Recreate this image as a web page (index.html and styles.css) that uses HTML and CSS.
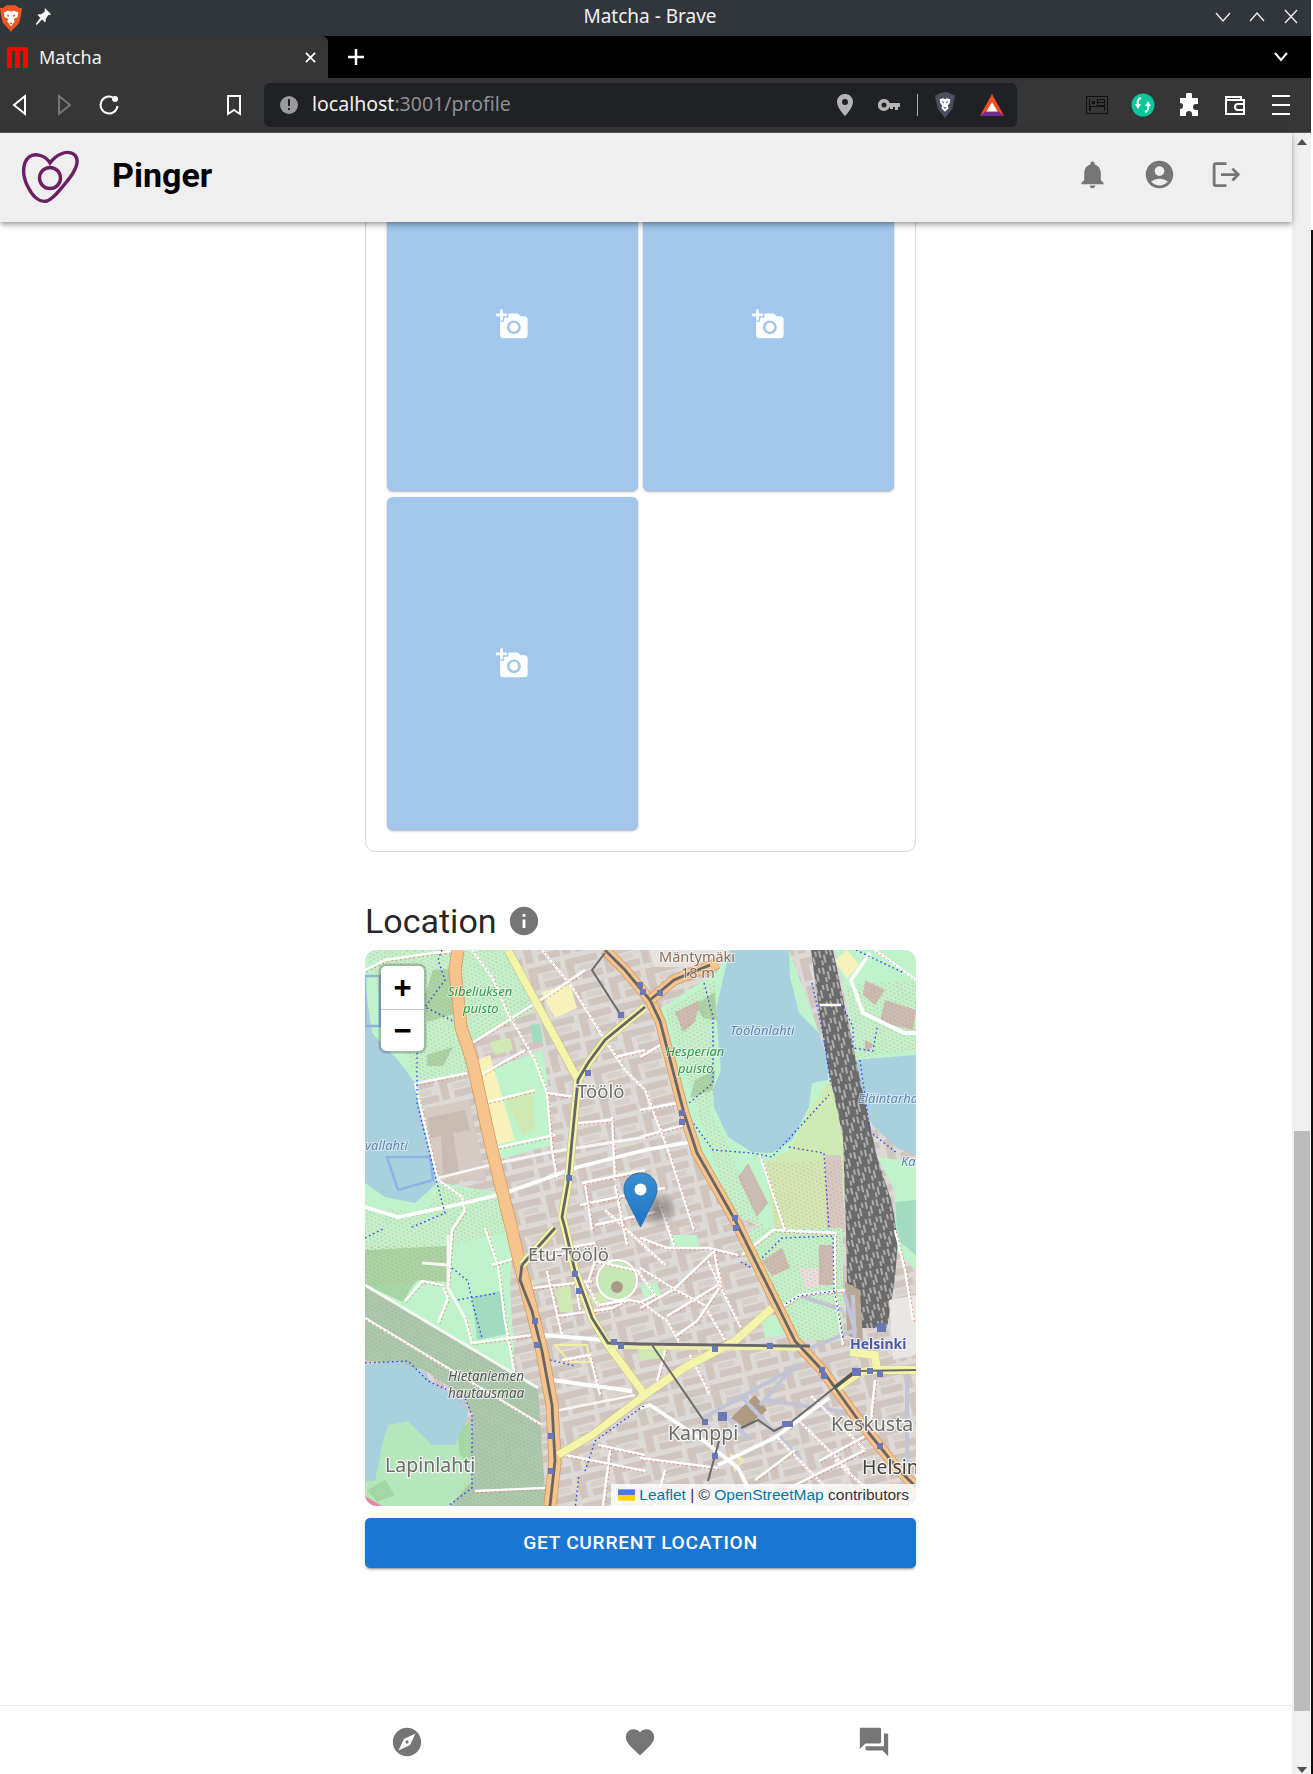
FILE: index.html
```html
<!DOCTYPE html>
<html lang="en">
<head>
<meta charset="utf-8">
<title>Matcha - Brave</title>
<link rel="stylesheet" href="styles.css">
</head>
<body>
<div class="window">
  <div class="titlebar">
    <div class="tb-left">
      <svg class="brave" viewBox="0 0 24 30"><path class="brave-o" d="M3 3 7 0h10l4 3 3 0-1 7-2 9-9 10-9-10-2-9-1-7z"/><path class="brave-w" d="M4 8l5-2 3 1 3-1 5 2-1 5-4 2 1 3-4 5-4-5 1-3-4-2z"/><path class="brave-o" d="M7 10l3 1-1 2zM17 10l-3 1 1 2zM10 19h4l-2 2z"/></svg>
      <svg class="pin" viewBox="0 0 20 20"><path class="white" d="M12 1l7 7-2 1-1 0-3 4 0 3-1 1-3-3-6 6-1-1 5-7-3-3 1-1 3 0 4-3 0-1z"/></svg>
    </div>
    <div class="win-title">Matcha - Brave</div>
    <div class="win-btns">
      <svg class="winb" viewBox="0 0 18 18"><path class="ln" d="M2 5l7 8 7-8"/></svg>
      <svg class="winb" viewBox="0 0 18 18"><path class="ln" d="M2 13l7-8 7 8"/></svg>
      <svg class="winb" viewBox="0 0 18 18"><path class="ln" d="M3 2l12 13M15 2L3 15"/></svg>
    </div>
  </div>
  <div class="tabstrip">
    <div class="tab">
      <svg class="favicon" viewBox="0 0 21 21"><path class="red" d="M0 0h21v21h-5V4h-3v17H8V4H5v17H0z"/></svg>
      <span class="tab-title">Matcha</span>
      <svg class="tab-x" viewBox="0 0 12 12"><path class="ln2" d="M1 1l10 10M11 1L1 11"/></svg>
    </div>
    <svg class="newtab" viewBox="0 0 16 16"><path class="ln3" d="M8 0v16M0 8h16"/></svg>
    <svg class="tablist" viewBox="0 0 14 10"><path class="ln2" d="M1 1l6 7 6-7"/></svg>
  </div>
  <div class="toolbar">
    <svg class="tbi" viewBox="0 0 24 24"><path class="ln2" d="M17 3v18L6 12z"/></svg>
    <svg class="tbi fwd" viewBox="0 0 24 24"><path class="ln2 dim" d="M7 3v18l11-9z"/></svg>
    <svg class="tbi rel" viewBox="0 0 24 24"><path class="ln2" d="M17 5a8.500 8.500 0 1 0 3.500 8"/><circle class="white" cx="18" cy="6" r="3"/></svg>
    <svg class="tbi mark" viewBox="0 0 24 24"><path class="ln2" d="M6 3h12v18l-6-4-6 4z"/></svg>
    <div class="omnibox">
      <svg class="info-ic" viewBox="0 0 18 18"><circle class="grey" cx="9" cy="9" r="9"/><path class="dark" d="M8 3h2v7H8zM8 12h2v2H8z"/></svg>
      <div class="url"><span class="url-host">localhost</span><span class="url-rest">:3001/profile</span></div>
      <svg class="omi omi-pin" viewBox="0 0 24 24"><path class="lgrey" d="M12 1c-4.500 0-8 3.500-8 8 0 6 8 14 8 14s8-8 8-14c0-4.500-3.500-8-8-8zm0 11a3 3 0 1 1 0-6 3 3 0 0 1 0 6z"/></svg>
      <svg class="omi omi-key" viewBox="0 0 24 24"><path class="lgrey" d="M6 6a6 6 0 0 1 5.500 4H22v4h-2v3h-3v-3h-2v2h-3v-2h-.5A6 6 0 1 1 6 6zm0 3.500a2.500 2.500 0 1 0 0 5 2.500 2.500 0 0 0 0-5z"/></svg>
      <div class="omi-sep"></div>
      <svg class="omi omi-shield" viewBox="0 0 24 30"><path class="shield" d="M3 3l4-2 5-1 5 1 4 2 2 1-1 6-2 9-8 10-8-10-2-9-1-6z"/><path class="white" d="M6 8l4-1 2 1 2-1 4 1-1 5-2 2 1 3-4 4-4-4 1-3-2-2z"/><path class="shield" d="M8.500 10l2.500 1-1 1.500zM15.500 10l-2.500 1 1 1.500zM10 17h4l-2 2z"/></svg>
      <svg class="omi omi-bat" viewBox="0 0 26 24"><path class="bat-o" d="M13 0l13 24H0z"/><path class="bat-p" d="M0 24l6-5h14l6 5z"/><path class="bat-w" d="M13 9l6 10H7z"/></svg>
    </div>
    <div class="tb-right">
      <svg class="tbi" viewBox="0 0 24 24"><path class="news" d="M1 3h22v18H1z"/><path class="news-l" d="M3 5h18v14H3zM6 7h5v5H6zM13 8h6M13 11h6M6 15h13M6 17h13"/></svg>
      <svg class="tbi" viewBox="0 0 24 24"><circle class="green" cx="12" cy="12" r="11.500"/><path class="ln2" d="M10 5c-3 1-4 4-3 7M14 19c3-1 4-4 3-7"/><path class="white" d="M7 16l-3-5h6zM17 8l3 5h-6z"/></svg>
      <svg class="tbi" viewBox="0 0 24 24"><path class="white" d="M9 2a3 3 0 0 1 6 0v3h6v6h-2a3 3 0 0 0 0 6h2v6H15v-2a3 3 0 0 0-6 0v2H3v-7a3 3 0 0 0 0-6V5h6z"/></svg>
      <svg class="tbi" viewBox="0 0 24 24"><path class="ln2" d="M3 7V4h15v3M3 7h18v14H3zM21 11h-6a3 3 0 0 0 0 6h6"/></svg>
      <svg class="tbi" viewBox="0 0 24 24"><path class="ln2" d="M3 3h18M3 12h18M3 21h18"/></svg>
    </div>
  </div>

  <div class="page">
    <div class="app">
      <header class="app-header">
        <svg class="logo" viewBox="0 0 60 55"><path class="logo-ln" d="M30 13C26 6 15 2 9 7 2 13 2 26 8 37c5 10 12 16 19 14 6-2 11-9 17-16 7-8 14-17 13-25C56 2 47 1 41 4c-5 2-8 5-11 9z"/><circle class="logo-ln" cx="30" cy="28" r="10.500"/></svg>
        <div class="brand">Pinger</div>
        <div class="head-icons">
          <div class="head-btn"><svg class="ic33" viewBox="0 0 24 24"><path d="M12 22c1.100 0 2-.9 2-2h-4c0 1.100.89 2 2 2zm6-6v-5c0-3.070-1.640-5.640-4.500-6.320V4c0-.83-.67-1.500-1.500-1.500s-1.500.67-1.500 1.500v.68C7.630 5.360 6 7.920 6 11v5l-2 2v1h16v-1l-2-2z"/></svg></div>
          <div class="head-btn"><svg class="ic33" viewBox="0 0 24 24"><path d="M12 2C6.480 2 2 6.480 2 12s4.480 10 10 10 10-4.480 10-10S17.520 2 12 2zm0 4c1.930 0 3.500 1.570 3.500 3.500S13.930 13 12 13s-3.500-1.570-3.500-3.500S10.070 6 12 6zm0 14c-2.030 0-4.430-.82-6.140-2.880C7.550 15.800 9.680 15 12 15s4.450.8 6.140 2.120C16.430 19.180 14.030 20 12 20z"/></svg></div>
          <div class="head-btn"><svg class="ic33" viewBox="0 0 24 24"><path d="M17 7l-1.410 1.410L18.170 11H8v2h10.170l-2.580 2.580L17 17l5-5zM4 5h8V3H4c-1.100 0-2 .9-2 2v14c0 1.100.9 2 2 2h8v-2H4V5z"/></svg></div>
        </div>
      </header>

      <main class="main">
        <div class="content">
          <section class="photo-card">
            <div class="photo-grid">
              <div class="tile"><svg class="cam" viewBox="0 0 24 24"><path d="M3 4V1h2v3h3v2H5v3H3V6H0V4h3zm3 6V7h3V4h7l1.830 2H21c1.100 0 2 .9 2 2v12c0 1.100-.9 2-2 2H5c-1.100 0-2-.9-2-2V10h3zm7 9c2.760 0 5-2.240 5-5s-2.240-5-5-5-5 2.240-5 5 2.240 5 5 5zm-3.200-5c0 1.770 1.430 3.200 3.200 3.200s3.200-1.430 3.200-3.200-1.430-3.200-3.200-3.200-3.200 1.430-3.200 3.200z"/></svg></div>
              <div class="tile"><svg class="cam" viewBox="0 0 24 24"><path d="M3 4V1h2v3h3v2H5v3H3V6H0V4h3zm3 6V7h3V4h7l1.830 2H21c1.100 0 2 .9 2 2v12c0 1.100-.9 2-2 2H5c-1.100 0-2-.9-2-2V10h3zm7 9c2.760 0 5-2.240 5-5s-2.240-5-5-5-5 2.240-5 5 2.240 5 5 5zm-3.200-5c0 1.770 1.430 3.200 3.200 3.200s3.200-1.430 3.200-3.200-1.430-3.200-3.200-3.200-3.200 1.430-3.200 3.200z"/></svg></div>
              <div class="tile"><svg class="cam" viewBox="0 0 24 24"><path d="M3 4V1h2v3h3v2H5v3H3V6H0V4h3zm3 6V7h3V4h7l1.830 2H21c1.100 0 2 .9 2 2v12c0 1.100-.9 2-2 2H5c-1.100 0-2-.9-2-2V10h3zm7 9c2.760 0 5-2.240 5-5s-2.240-5-5-5-5 2.240-5 5 2.240 5 5 5zm-3.200-5c0 1.770 1.430 3.200 3.200 3.200s3.200-1.430 3.200-3.200-1.430-3.200-3.200-3.200-3.200 1.430-3.200 3.200z"/></svg></div>
            </div>
          </section>

          <div class="loc-head">
            <h2 class="loc-title">Location</h2>
            <svg class="ic34" viewBox="0 0 24 24"><path d="M12 2C6.480 2 2 6.480 2 12s4.480 10 10 10 10-4.480 10-10S17.520 2 12 2zm1 15h-2v-6h2v6zm0-8h-2V7h2v2z"/></svg>
          </div>

          <div class="map">
            <svg class="tiles" viewBox="0 0 551 556">
              <defs>
                <pattern id="bld" width="38" height="28" patternUnits="userSpaceOnUse" patternTransform="rotate(-14)">
                  <rect class="m-block" width="38" height="28"/>
                  <rect class="m-bld" x="1" y="2" width="33" height="7"/>
                  <rect class="m-bld" x="1" y="9" width="8" height="16"/>
                  <rect class="m-bld" x="14" y="18" width="22" height="7"/>
                  <rect class="m-bld2" x="14" y="11" width="16" height="5"/>
                </pattern>
                <pattern id="yard" width="11" height="17" patternUnits="userSpaceOnUse" patternTransform="rotate(-13)">
                  <rect class="m-yard" width="11" height="17"/>
                  <path class="m-yardl" d="M2 1v7M6 6v8M9 1v5M3 11v5"/>
                </pattern>
                <pattern id="reds" width="9" height="7" patternUnits="userSpaceOnUse" patternTransform="rotate(25)">
                  <path class="m-reddot" d="M0 1h2.200M4.500 1h2.200M2 4.500h2.200M6.500 4.500h2.200"/>
                </pattern>
                <g id="streets">
                  <path d="M0 20 20 10 67 3 100 0"/>
                  <path d="M107 0 127 27 143 63 170 110 182 143 187 200 192 228"/>
                  <path d="M107 93 180 47 220 20"/>
                  <path d="M177 0 207 37 240 90 260 120 280 140 302 197 329 280"/>
                  <path d="M53 133 102 123"/>
                  <path d="M182 143 210 147"/>
                  <path d="M213 173 247 170"/>
                  <path d="M217 233 280 220"/>
                  <path d="M220 233 227 280"/>
                  <path d="M247 167 250 230"/>
                  <path d="M280 100 250 107"/>
                  <path d="M50 133 73 230 97 247 100 260 87 280 83 338 100 368 107 393 167 385"/>
                  <path d="M275 107 295 95"/>
                  <path d="M275 160 312 153"/>
                  <path d="M275 187 319 175"/>
                  <path d="M215 255 275 242 300 238"/>
                  <path d="M230 275 290 262"/>
                  <path d="M275 288 302 298 343 298 373 305"/>
                  <path d="M127 315 150 308"/>
                  <path d="M120 278 133 315 140 371 150 425"/>
                  <path d="M40 351 57 331 77 335 83 348 73 373"/>
                  <path d="M0 368 177 475"/>
                  <path d="M110 541 180 538"/>
                  <path d="M167 338 227 331"/>
                  <path d="M170 311 200 303"/>
                  <path d="M193 366 247 358 263 350"/>
                  <path d="M182 321 197 385"/>
                  <path d="M230 311 247 315 273 321 290 345 275 352 263 350 233 355 222 335 230 311"/>
                  <path d="M200 505 280 521"/>
                  <path d="M233 495 280 505"/>
                  <path d="M275 318 309 339 339 355 360 390"/>
                  <path d="M302 366 353 335"/>
                  <path d="M349 301 356 335 332 371 312 385"/>
                  <path d="M275 352 302 371 316 395"/>
                  <path d="M275 358 309 339 349 301"/>
                  <path d="M343 311 376 378"/>
                  <path d="M434 471 485 521"/>
                  <path d="M410 485 458 535"/>
                  <path d="M454 511 502 485"/>
                  <path d="M275 508 353 518"/>
                  <path d="M205 300 215 360"/>
                  <path d="M250 235 262 295"/>
                  <path d="M240 260 300 315"/>
                  <path d="M295 255 310 298"/>
                  <path d="M190 300 230 293"/>
                  <path d="M197 410 225 405 235 445"/>
                  <path d="M300 400 290 440"/>
                  <path d="M325 405 345 445"/>
                  <path d="M245 500 238 556"/>
                  <path d="M300 520 290 556"/>
                  <path d="M430 500 390 530"/>
                  <path d="M420 540 500 500"/>
                  <path d="M470 510 520 556"/>
                  <path d="M510 430 505 480 540 520"/>
                  <path d="M446 446 500 500"/>
                  <path d="M120 200 190 185"/>
                  <path d="M110 155 170 140"/>
                  <path d="M115 125 160 100"/>
                  <path d="M377 305 408 280 470 283 470 340 478 395"/>
                  <path d="M415 358 435 345 480 340"/>
                  <path d="M510 0 540 22 551 30"/>
                  <path d="M395 205 420 280"/>
                  <path d="M530 280 540 320 548 370"/>
                </g>
              </defs>

              <rect class="m-base" width="551" height="556"/>

              <!-- green areas -->
              <path class="m-park" d="M0 0H143L170 60 105 93 107 125 53 133 72 233 140 243 150 278 145 335 150 420 173 438 60 410 0 335V260L0 0z"/>
              <path class="m-forest" d="M68 20 92 18 96 62 62 72 60 45zM30 70 55 62 48 84 32 80zM62 105 88 97 78 116 62 116zM0 300 82 296 84 332 52 330 38 352 0 335z"/>
              <path class="m-block2" d="M60 158 104 150 122 232 73 228z"/>
              <path class="m-brown" d="M62 168 100 160 105 180 88 183 94 222 78 225 76 186 65 188z"/>
              <path class="m-park" d="M110 125 178 100 184 145 186 195 132 210z"/>
              <path class="m-yellow" d="M112 110 125 105 150 190 130 195zM176 42 205 35 212 58 190 68z"/>
              <path class="m-grass" d="M140 148 168 138 170 178 158 186zM125 92 145 88 148 100 130 105z"/>
              <path class="m-teal" d="M165 75 175 74 178 92 168 92z"/>
              <path class="m-park" d="M73 232 140 245 146 282 118 278 84 295 0 300 0 258 60 262z"/>
              <path class="m-cem" d="M0 335 173 438 181 556 85 556 105 520 108 465 100 448 60 420 0 410z"/>
              <path class="m-park" d="M50 332 85 335 115 392 150 420 130 412 100 385 60 370 38 352z"/>
              <path class="m-teal" d="M107 347 138 340 142 384 112 390z"/>
              <path class="m-lap" d="M0 530 10 531 17 495 23 475 43 471 67 495 90 495 103 470 108 530 85 556H0z"/>
              <path class="m-forest" d="M2 540 20 530 30 545 12 552zM92 478 106 472 106 515 95 505z"/>
              <path class="m-pink" d="M0 546 17 556H0z"/>

              <path class="m-mant" d="M285 0H365L352 17 290 17z"/>
              <path class="m-park" d="M296 58 352 22 365 0H424L464 110 481 200 472 225 470 280H400L372 265 335 205z"/>
              <path class="m-grass" d="M400 212 425 200 444 160 465 130 481 195 478 280 410 280z"/>
              <path class="m-forest" d="M330 130 350 120 348 140 325 148zM330 55 350 42 352 70 338 68z"/>
              <path class="m-brown" d="M373 227 383 213 403 253 392 267zM310 62 335 50 330 72 318 82z"/>
              <path class="m-block2" d="M460 205 476 205 480 280 462 280z"/>
              <path class="m-park" d="M387 278 478 278 478 390 434 390 410 358 376 300z"/>
              <path class="m-brown" d="M397 311 417 298 425 318 407 326zM454 295 468 295 468 335 454 335z"/>
              <path class="m-mant" d="M434 318 454 318 454 338 440 338z"/>
              <path class="m-park" d="M305 285 332 285 335 300 305 298zM275 335 292 332 296 345 280 350zM395 365 415 365 420 385 400 388z"/>
              <path class="m-grass" d="M225 345 240 340 243 352 228 355zM272 397 300 393 302 408 275 410zM190 340 205 335 208 362 195 362z"/>

              <path class="m-park" d="M470 0H551V105L491 110 478 33z"/>
              <path class="m-yellow" d="M470 10 482 0 494 14 482 29z"/>
              <path class="m-brown" d="M500 30 520 40 510 55 498 45zM520 50 551 60 548 80 515 72zM500 90 510 95 500 102z"/>
              <path class="m-park" d="M512 207 551 212V320L530 300 530 240z"/>
              <path class="m-teal" d="M530 252 551 250V280L532 280zM532 278H551V305L535 292z"/>

              <path class="m-water" d="M0 33 7 83 33 110 50 133 57 167 72 233 50 253 20 247 0 233z"/>
              <path class="m-marina" d="M22 207 65 207 68 230 33 240z"/>
              <path class="m-marina" d="M0 26 15 26 15 76 0 76z"/>
              <path class="m-water" d="M365 0 424 0 425 27 434 63 454 83 463 110 463 130 447 133 444 157 427 190 407 203 387 202 363 187 349 157 348 140 356 120 353 87 351 60 360 20z"/>
              <path class="m-water" d="M491 110 551 105V205L532 198 508 176 493 135z"/>
              <path class="m-water" d="M0 415 33 411 57 421 70 435 100 451 103 465 90 495 67 495 43 471 23 475 17 495 10 531H0z"/>
              <path class="m-reddots" d="M0 335 173 438 181 556 85 556 108 520 108 465 60 420 0 410zM0 296H82V335H0zM400 212 478 210V280H410z"/>
              <path class="m-reddots" d="M0 0 143 0 170 60 105 93 107 125 53 133 40 100 20 60zM300 60 350 30 350 140 345 160 365 200 400 280H372zM75 235 140 245 146 282 84 295 0 300 0 258 60 262zM480 35 551 30V100L491 108zM387 278 478 278 478 390 434 390 410 358 376 300z"/>

              <!-- railyard -->
              <path class="m-yardf" d="M446 0H468L491 110 512 207 527 253 533 290 530 328 522 378 496 378 482 335 481 280 478 187 464 123 454 60z"/>
              <path class="m-whitethin" d="M455 55 476 55"/>
              <path class="m-whitebar" d="M524 350 551 345V405L528 410z"/>
              <path class="m-brownb" d="M480 332 495 340 498 392 482 385z"/>
              <path class="m-plaza" d="M366 468 390 445 402 460 380 478z"/>
              <path class="m-ped" d="M338 468 436 414M375 445 436 510M395 455 430 415M400 450 500 465M360 465 385 490M440 400 490 380 478 340M488 345 490 395 510 400M542 420 542 515M478 360 436 346"/>
              <circle class="m-greenc" cx="252" cy="330" r="20"/>
              <circle class="m-brownc" cx="252" cy="337" r="6"/>
              <path class="m-yellowo" d="M190 395 222 395 225 412 205 412zM366 505 378 510 370 520z"/>

              <use href="#streets" class="m-st"/>
              <use href="#streets" class="m-dots" transform="translate(1.600 1.800)"/>

              <!-- main white streets -->
              <path class="m-wide" d="M0 257 33 267 100 253 140 243 213 217 280 200 326 192"/>
              <path class="m-mid" d="M73 228 133 213 187 202 280 187"/>
              <path class="m-mid" d="M0 335 173 438"/>
              <path class="m-wide" d="M177 385 240 390"/>
              <path class="m-wide" d="M187 430 267 441"/>
              <path class="m-mid" d="M57 313 83 315"/>
              <path class="m-mid" d="M83 285 83 338 100 368"/>
              <path class="m-wide" d="M275 458 285 455 339 491 373 518 393 556"/>
              <path class="m-wide" d="M353 515 409 488 464 448"/>
              <path class="m-wide" d="M505 3 486 30 498 63 539 83 551 83"/>
              <path class="m-mid" d="M190 461 270 445"/>

              <!-- cycle routes -->
              <path class="m-cyc" d="M77 0 73 10 80 30 60 57 90 72M52 103 52 153 72 233 80 263 45 278M0 288 20 278M87 318 103 331 107 351 117 388M93 350 133 343M0 413 43 411 63 431 100 448 107 465 107 538 83 556M339 33 348 67 348 133 324 153M326 170 348 200 387 203 407 207 464 145M424 197 459 203 464 280M447 33 458 83 466 135M478 57 488 77 488 98 508 101 512 78M495 110 505 182 532 203M491 0 539 23M376 312 387 318 417 288 468 286 469 338 474 366 478 388M417 356 434 346 471 341M370 395 407 358M220 521 230 491 280 455M210 560 214 525M185 410 210 416"/>

              <!-- major roads -->
              <path class="m-orange-c" d="M93 0 90 20 96 77 107 110 127 200 147 280 155 315 167 361 177 401 187 455 190 511 185 556"/>
              <path class="m-orange" d="M93 0 90 20 96 77 107 110 127 200 147 280 155 315 167 361 177 401 187 455 190 511 185 556"/>
              <path class="m-orange2-c" d="M240 0 260 20 285 50 295 71 319 163 332 203 370 270 430 391 458 421 491 467 532 518 555 541"/>
              <path class="m-orange2" d="M240 0 260 20 285 50 295 71 319 163 332 203 370 270 430 391 458 421 491 467 532 518 555 541"/>
              <path class="m-orange2-c" d="M285 50 309 30 353 13"/>
              <path class="m-orange2" d="M285 50 309 30 353 13"/>
              <path class="m-orange2" d="M510 556 530 535"/>

              <path class="m-yel-c" d="M143 0 213 130 203 233 197 267 200 278 210 321 227 368 243 395 280 445 227 485 193 505"/>
              <path class="m-yel-c" d="M280 57 240 90 223 113 213 130"/>
              <path class="m-yel-c" d="M157 315 190 278"/>
              <path class="m-yel-c" d="M275 448 319 418 370 391 407 358"/>
              <path class="m-yel-c" d="M485 402 510 405 512 420 555 420M512 420 495 422 469 440"/>
              <path class="m-yel" d="M143 0 213 130 203 233 197 267 200 278 210 321 227 368 243 395 280 445 227 485 193 505"/>
              <path class="m-yel" d="M280 57 240 90 223 113 213 130"/>
              <path class="m-yel" d="M157 315 190 278"/>
              <path class="m-yelw" d="M275 448 319 418 370 391 407 358"/>
              <path class="m-yelw" d="M485 402 510 405 512 420 555 420M512 420 495 422 469 440"/>
              <path class="m-yelthin" d="M243 397 440 399"/>

              <!-- tram and metro -->
              <path class="m-rail" d="M157 315 155 330 167 361 177 401 187 455 190 511 185 556"/>
              <path class="m-rail" d="M240 0 260 20 285 50 295 71 319 163 332 203 370 270 430 391 458 421 491 467 532 518 555 541"/>
              <path class="m-rail" d="M285 50 309 30 345 15"/>
              <path class="m-rail" d="M280 57 240 90 223 113 213 130 207 190 203 233 197 267 200 278 210 321 227 368 243 393 275 394 424 396 445 396"/>
              <path class="m-rail" d="M157 315 190 278"/>
              <path class="m-railt" d="M240 3 227 20 257 67"/>
              <path class="m-railt" d="M287 395 339 471M354 491 343 531"/>
              <path class="m-railt" d="M376 478 393 470 409 481 425 473 469 438 491 421 555 420"/>
              <path class="m-rail2" d="M469 438 491 421"/>

              <path class="m-station" d="M272 32h6v6h-6zM275 39h6v6h-6zM253 62h6v6h-6zM220 120h6v6h-6zM201 225h6v6h-6zM292 40h6v6h-6zM314 160h6v6h-6zM314 169h6v6h-6zM367 265h6v6h-6zM368 275h6v6h-6zM207 321h6v6h-6zM211 338h6v6h-6zM167 368h6v6h-6zM169 392h6v6h-6zM183 483h6v6h-6zM183 518h6v6h-6zM246 389h6v6h-6zM253 393h6v6h-6zM347 396h6v6h-6zM402 393h6v6h-6zM454 417h6v6h-6zM456 423h6v6h-6zM487 418h9v8h-9zM502 418h6v6h-6zM512 421h6v6h-6zM512 493h6v6h-6zM353 462h9v9h-9zM337 469h6v6h-6zM347 503h6v6h-6zM417 471h11v6h-11zM512 373h9v9h-9z"/>

              <!-- labels -->
              <text class="l-green" x="83" y="46">Sibeliuksen</text>
              <text class="l-green" x="98" y="63">puisto</text>
              <text class="l-mant" x="294" y="12">Mäntymäki</text>
              <text class="l-mant" x="316" y="28">18 m</text>
              <text class="l-water" x="365" y="85">Töölönlahti</text>
              <text class="l-green" x="301" y="106">Hesperian</text>
              <text class="l-green" x="313" y="123">puisto</text>
              <text class="l-place" x="212" y="148">Töölö</text>
              <text class="l-water" x="0" y="200">vallahti</text>
              <text class="l-water" x="493" y="153">Eläintarha</text>
              <text class="l-water" x="536" y="216">Ka</text>
              <text class="l-place" x="163" y="311">Etu-Töölö</text>
              <text class="l-cem" x="83" y="431">Hietaniemen</text>
              <text class="l-cem" x="83" y="448">hautausmaa</text>
              <text class="l-place2" x="20" y="522">Lapinlahti</text>
              <text class="l-place2" x="303" y="490">Kamppi</text>
              <text class="l-station" x="485" y="399">Helsinki</text>
              <text class="l-place2" x="466" y="481">Keskusta</text>
              <text class="l-city" x="497" y="524">Helsinki</text>
            </svg>

            <div class="pin-shadow"></div>
            <svg class="marker" viewBox="0 0 35 56"><defs><linearGradient id="pinfill" x1="0" y1="0" x2="0" y2="1"><stop offset="0" stop-color="#3a8fd0"/><stop offset="1" stop-color="#1e74c4"/></linearGradient></defs><path class="marker-body" d="M17.500 1C8 1 1 8 1 17c0 4 1.500 8 3.500 12L17.500 55 30.500 29c2-4 3.500-8 3.500-12C34 8 27 1 17.500 1z"/><circle class="marker-hole" cx="17.500" cy="17.500" r="6"/></svg>

            <div class="zoom-ctl">
              <div class="zoom-btn">+</div>
              <div class="zoom-btn">−</div>
            </div>
            <div class="attrib"><svg class="flag" viewBox="0 0 12 8"><rect class="flag-b" width="12" height="4"/><rect class="flag-y" y="4" width="12" height="4"/></svg> <a class="attrib-link">Leaflet</a> | © <a class="attrib-link">OpenStreetMap</a> contributors</div>
          </div>

          <button class="loc-btn" type="button">GET CURRENT LOCATION</button>
        </div>
      </main>

      <footer class="bottom-nav">
        <div class="nav-row">
          <div class="nav-item"><svg class="ic34" viewBox="0 0 24 24"><path d="M12 10.900c-.61 0-1.100.49-1.100 1.100s.49 1.100 1.100 1.100c.61 0 1.100-.49 1.100-1.100s-.49-1.100-1.100-1.100zM12 2C6.480 2 2 6.480 2 12s4.480 10 10 10 10-4.480 10-10S17.520 2 12 2zm2.190 12.190L6 18l3.810-8.190L18 6l-3.810 8.190z"/></svg></div>
          <div class="nav-item"><svg class="ic34" viewBox="0 0 24 24"><path d="M12 21.350l-1.450-1.320C5.400 15.360 2 12.280 2 8.500 2 5.420 4.420 3 7.500 3c1.740 0 3.410.81 4.500 2.090C13.090 3.810 14.760 3 16.500 3 19.580 3 22 5.420 22 8.500c0 3.780-3.400 6.860-8.550 11.540L12 21.350z"/></svg></div>
          <div class="nav-item"><svg class="ic34" viewBox="0 0 24 24"><path d="M21 6h-2v9H6v2c0 .55.45 1 1 1h11l4 4V7c0-.55-.45-1-1-1zm-4 6V3c0-.55-.45-1-1-1H3c-.55 0-1 .45-1 1v14l4-4h10c.55 0 1-.45 1-1z"/></svg></div>
        </div>
      </footer>
    </div>

    <div class="scrollbar">
      <div class="sb-up"></div>
      <div class="sb-thumb"></div>
      <div class="sb-down"></div>
    </div>
  </div>
</div>
</body>
</html>
```

FILE: styles.css
```css
* { box-sizing: border-box; }
html, body { margin: 0; padding: 0; }
body {
  width: 1313px;
  height: 1774px;
  overflow: hidden;
  background: linear-gradient(#fff 0, #fff 230px, #111 230px);
  font-family: "Noto Sans", sans-serif;
}
.window { width: 1311px; height: 1774px; display: flex; flex-direction: column; }

/* window title bar */
.titlebar {
  width: 1311px;
  height: 36px;
  background: #31363b;
  display: grid;
  grid-template-columns: 1fr auto 1fr;
  align-items: center;
  padding-right: 11px;
  flex: none;
}
.tb-left { display: flex; align-items: center; }
.brave { width: 22px; height: 28px; margin-top: 1px; }
.brave-o { fill: #f2561f; }
.brave-w { fill: #fff; }
.pin { width: 18px; height: 18px; margin-left: 12px; margin-bottom: 5px; }
.win-title { color: #eff0f1; font-size: 19px; line-height: 24px; padding-bottom: 4px; }
.win-btns { display: flex; justify-content: flex-end; gap: 16px; margin-bottom: 3px; }
.winb { width: 18px; height: 18px; }
.white { fill: #fff; }
.ln { fill: none; stroke: #eff0f1; stroke-width: 1.300; }
.ln2 { fill: none; stroke: #fff; stroke-width: 2; }
.ln2.dim { stroke: #777; }
.ln3 { fill: none; stroke: #fff; stroke-width: 2.500; }
.red { fill: #f00; }

/* tabs */
.tabstrip {
  width: 1311px;
  height: 42px;
  background: #000;
  display: flex;
  align-items: center;
  flex: none;
}
.tab {
  width: 328px;
  height: 42px;
  background: #363636;
  border-top-right-radius: 6px;
  display: flex;
  align-items: center;
  padding-left: 7px;
}
.favicon { width: 21px; height: 21px; }
.tab-title { color: #f2f2f2; font-size: 18px; margin-left: 11px; flex: 1; }
.tab-x { width: 11px; height: 11px; margin-right: 12px; }
.newtab { width: 16px; height: 16px; margin-left: 20px; }
.tablist { width: 14px; height: 10px; margin-left: auto; margin-right: 23px; }

/* toolbar */
.toolbar {
  width: 1311px;
  height: 55px;
  background: #363636;
  border-bottom: 1px solid #5a5a5a;
  display: flex;
  align-items: center;
  padding-left: 8px;
  flex: none;
}
.tbi { width: 24px; height: 24px; flex: none; }
.fwd { margin-left: 20px; }
.rel { margin-left: 21px; }
.mark { margin-left: 101px; }
.omnibox {
  width: 753px;
  height: 44px;
  margin-left: 18px;
  background: #202124;
  border-radius: 6px;
  display: flex;
  align-items: center;
  padding: 0 13px 0 16px;
}
.info-ic { width: 18px; height: 18px; flex: none; }
.grey { fill: #9a9a9e; }
.dark { fill: #202124; }
.url { margin-left: 14px; font-size: 19.500px; line-height: 26px; padding-bottom: 2px; flex: 1; }
.url-host { color: #f1f1f1; }
.url-rest { color: #8f9094; }
.omi { height: 24px; width: 24px; flex: none; }
.omi-key { margin-left: 21px; }
.omi-sep { width: 1px; height: 22px; background: #aaa; margin-left: 15px; }
.omi-shield { margin-left: 15px; height: 27px; }
.omi-bat { margin-left: 23px; }
.lgrey { fill: #b4b4b4; }
.shield { fill: #4c4d5e; }
.bat-o { fill: #f2501f; }
.bat-p { fill: #6b2c91; }
.bat-w { fill: #fff; }
.tb-right { display: flex; gap: 22px; margin-left: 68px; }
.news { fill: #111; }
.news-l { fill: none; stroke: #444; stroke-width: 1.500; }
.green { fill: #08c79a; }

/* page */
.page { flex: 1; display: flex; min-height: 0; }
.app { width: 1292px; display: flex; flex-direction: column; background: #fff; position: relative; }
.app-header {
  height: 89px;
  flex: none;
  background: #efefef;
  display: flex;
  align-items: center;
  position: relative;
  z-index: 2;
  box-shadow: 0 2px 4px -1px rgba(0,0,0,.25), 0 4px 5px rgba(0,0,0,.14), 0 1px 10px rgba(0,0,0,.12);
}
.logo { width: 60px; height: 55px; margin-left: 20px; }
.logo-ln { fill: none; stroke: #6b1e62; stroke-width: 3.400; }
.brand { font: 700 34px/40px Roboto, sans-serif; color: #000; margin-left: 32px; margin-bottom: 5px; }
.head-icons { display: flex; margin-left: auto; padding-right: 32px; padding-bottom: 7px; }
.head-btn { width: 67px; display: flex; justify-content: center; }
.ic33 { width: 33px; height: 33px; fill: #757575; display: block; }
.ic34 { width: 34px; height: 34px; fill: #757575; display: block; flex: none; }

.main { flex: 1; min-height: 0; overflow: hidden; padding-right: 11px; }
.content { width: 551px; margin: 0 auto; }

.photo-card {
  margin-top: -86px;
  border: 1px solid #d6d6d6;
  border-radius: 10px;
  padding: 21px;
}
.photo-grid { display: grid; grid-template-columns: 251px 251px; grid-auto-rows: 333px; gap: 6px 5px; }
.tile {
  background: #a2c6ec;
  border-radius: 6px;
  display: flex;
  align-items: center;
  justify-content: center;
  box-shadow: 0 1px 3px rgba(0,0,0,.22), 0 1px 1px rgba(0,0,0,.1);
}
.cam { width: 33px; height: 33px; fill: #fff; }

.loc-head { height: 46px; margin-top: 46px; margin-bottom: 6px; display: flex; align-items: center; gap: 10px; }
.loc-title { margin: 0; font: 400 34px/40px Roboto, sans-serif; color: rgba(0,0,0,.87); }

/* map */
.map { position: relative; height: 556px; border-radius: 12px; overflow: hidden; background: #ddd; }
.tiles { display: block; width: 551px; height: 556px; filter: blur(.5px); }
.m-base { fill: url(#bld); }
.m-block { fill: #dcd9d7; }
.m-bld { fill: #d0c6bf; }
.m-bld2 { fill: #d6cfca; }
.m-block2 { fill: #d5cbc4; }
.m-brown { fill: #c9bdb3; }
.m-park { fill: #bff3cb; }
.m-forest { fill: #a6d6a6; }
.m-grass { fill: #cfe9b2; }
.m-yellow { fill: #f7f2b9; }
.m-yellowo { fill: none; stroke: #f3efa0; stroke-width: 2; }
.m-teal { fill: #a2dcc0; }
.m-cem { fill: #a6cbae; }
.m-lap { fill: #b7e6bd; }
.m-pink { fill: #e687a5; }
.m-mant { fill: #e6e3df; }
.m-water { fill: #a9d0df; }
.m-marina { fill: none; stroke: #8fb4e4; stroke-width: 2.500; }
.m-reddots { fill: url(#reds); }
.m-reddot { stroke: #ec7a6f; stroke-width: .9; opacity: .55; fill: none; }
.m-yard { fill: #6b6b6b; }
.m-yardl { stroke: #cfcfcf; stroke-width: 1.300; fill: none; }
.m-yardf { fill: url(#yard); }
.m-whitethin { stroke: #fff; stroke-width: 2.500; fill: none; }
.m-whitebar { fill: #e9e6e4; }
.m-brownb { fill: #b8a898; }
.m-plaza { fill: #ad9984; }
.m-ped { fill: none; stroke: #c2c5d6; stroke-width: 4; }
.m-greenc { fill: #c6e8b6; stroke: #fff; stroke-width: 2; }
.m-brownc { fill: #a99a86; }
.m-st { fill: none; stroke: #fff; stroke-width: 2.400; }
.m-dots { fill: none; stroke: #ee7a6c; stroke-width: 1; stroke-dasharray: 1.500 3; }
.m-wide { fill: none; stroke: #fff; stroke-width: 3.800; }
.m-mid { fill: none; stroke: #f8f6f4; stroke-width: 2.800; }
.m-cyc { fill: none; stroke: #2f3ff0; stroke-width: 1.300; stroke-dasharray: 1.600 2.900; }
.m-orange-c { fill: none; stroke: #cf9a5e; stroke-width: 13; }
.m-orange { fill: none; stroke: #f8c48d; stroke-width: 11.500; }
.m-orange2-c { fill: none; stroke: #cf9a5e; stroke-width: 11; }
.m-orange2 { fill: none; stroke: #f8c48d; stroke-width: 9.500; }
.m-yel-c { fill: none; stroke: #bdbd7e; stroke-width: 8.500; }
.m-yel { fill: none; stroke: #f4f4ab; stroke-width: 7.500; }
.m-yelw { fill: none; stroke: #f4f4ab; stroke-width: 8; }
.m-yelthin { fill: none; stroke: #eff0a8; stroke-width: 3.500; }
.m-rail { fill: none; stroke: #666; stroke-width: 2.800; }
.m-railt { fill: none; stroke: #6a6a6a; stroke-width: 2; }
.m-rail2 { fill: none; stroke: #555; stroke-width: 3.500; }
.m-station { fill: #6b78b8; }
.tiles text { font-family: "Noto Sans", sans-serif; paint-order: stroke; stroke-linejoin: round; }
.l-green { font-size: 13px; font-style: italic; fill: #2f9b49; stroke: rgba(255,255,255,.55); stroke-width: 2px; }
.l-water { font-size: 13px; font-style: italic; fill: #5d87b5; stroke: rgba(255,255,255,.55); stroke-width: 2px; }
.l-mant { font-size: 14.500px; fill: #8c6d55; stroke: rgba(255,255,255,.6); stroke-width: 2px; }
.l-place { font-size: 18.500px; fill: #6c6c6c; stroke: rgba(255,255,255,.8); stroke-width: 2.500px; }
.l-place2 { font-size: 19.500px; fill: #6c6c6c; stroke: rgba(255,255,255,.8); stroke-width: 2.500px; }
.l-cem { font-size: 13.500px; font-style: italic; fill: #555; stroke: rgba(255,255,255,.7); stroke-width: 2px; }
.l-station { font-size: 14px; font-weight: 700; fill: #4a58aa; stroke: rgba(255,255,255,.7); stroke-width: 2px; }
.l-city { font-size: 19.500px; fill: #3f3f3f; stroke: rgba(255,255,255,.8); stroke-width: 2.500px; }

.marker { position: absolute; left: 258px; top: 222px; width: 35px; height: 56px; }
.marker-body { fill: url(#pinfill); stroke: #2a6fa8; stroke-width: 1; }
.marker-hole { fill: #fff; }
.pin-shadow {
  position: absolute;
  left: 272px;
  top: 240px;
  width: 42px;
  height: 38px;
  background: radial-gradient(closest-side, rgba(60,60,60,.55), rgba(60,60,60,0));
}
.zoom-ctl {
  position: absolute;
  left: 16px;
  top: 16px;
  width: 43px;
  background: #fff;
  border-radius: 5px;
  box-shadow: 0 0 0 2.500px rgba(0,0,0,.2);
}
.zoom-btn {
  height: 42.500px;
  display: flex;
  align-items: center;
  justify-content: center;
  font: 700 31px/1 "Liberation Sans", sans-serif;
  color: #000;
}
.zoom-btn + .zoom-btn { border-top: 1px solid #ccc; }
.attrib {
  position: absolute;
  right: 0;
  bottom: 0;
  height: 22px;
  padding: 0 7px;
  white-space: nowrap;
  background: rgba(255,255,255,.8);
  font: 15.500px/21px "Liberation Sans", sans-serif;
  color: #333;
}
.attrib-link { color: #0078a8; }
.flag { width: 17px; height: 12px; vertical-align: -1px; }
.flag-b { fill: #4c7be0; }
.flag-y { fill: #ffd500; }

.loc-btn {
  display: block;
  width: 551px;
  height: 50px;
  margin-top: 12px;
  border: 0;
  border-radius: 5px;
  background: #1976d2;
  color: #fff;
  font: 500 19.200px/1 Roboto, sans-serif;
  letter-spacing: .7px;
  box-shadow: 0 3px 1px -2px rgba(0,0,0,.2), 0 2px 2px rgba(0,0,0,.14), 0 1px 5px rgba(0,0,0,.12);
}

/* bottom navigation */
.bottom-nav { height: 69px; flex: none; background: #fff; border-top: 1px solid #eee; padding-right: 11px; }
.nav-row { width: 700px; height: 100%; margin: 0 auto; display: flex; }
.nav-item { flex: 1; display: flex; align-items: center; justify-content: center; padding-top: 3px; }

/* scrollbar */
.scrollbar { width: 19px; background: #f0f0f0; display: flex; flex-direction: column; position: relative; }
.sb-up, .sb-down { width: 0; height: 0; margin-left: 5px; border: 5px solid transparent; }
.sb-up { border-top: 0; border-bottom: 6px solid #505050; margin-top: 6px; }
.sb-thumb { width: 16px; height: 580px; margin: 986px 0 0 2px; background: #bcbcbc; }
.sb-down { border-bottom: 0; border-top: 6px solid #505050; margin-top: auto; margin-bottom: 1px; }
```
